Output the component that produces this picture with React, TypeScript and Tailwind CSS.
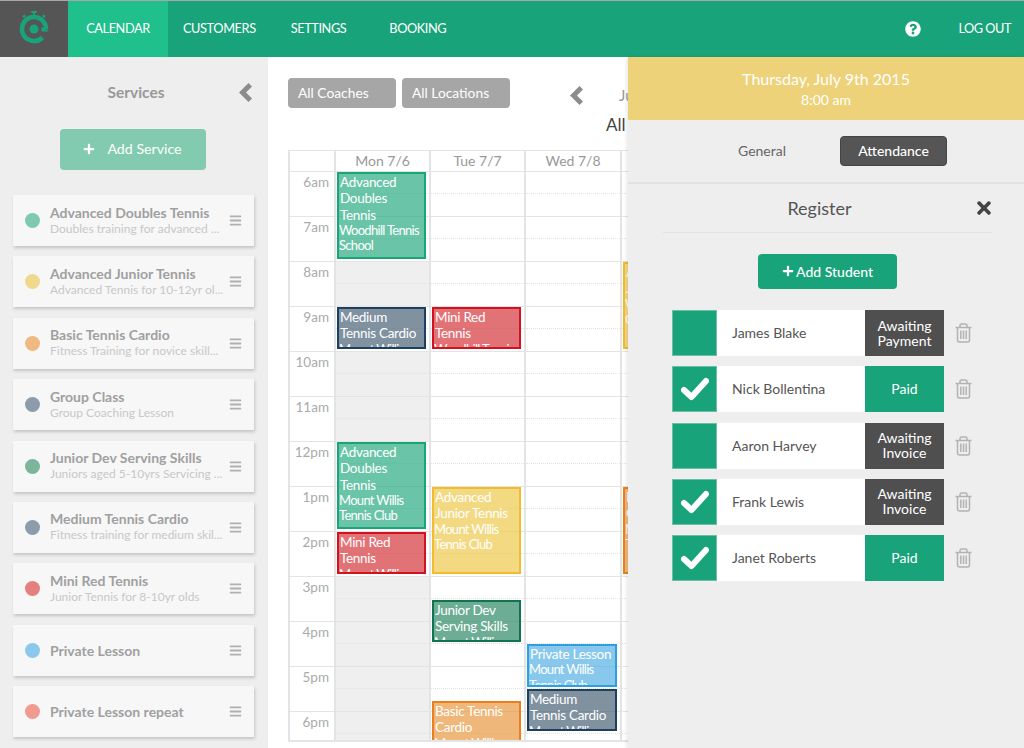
import React from "react";
import { FaBars, FaPlus, FaQuestionCircle, FaTimes } from "react-icons/fa";

const services = [
  { name: "Advanced Doubles Tennis", note: "Doubles training for advanced ...", dot: "bg-[#7fcaaf]" },
  { name: "Advanced Junior Tennis", note: "Advanced Tennis for 10-12yr ol...", dot: "bg-[#f0d98c]" },
  { name: "Basic Tennis Cardio", note: "Fitness Training for novice skill...", dot: "bg-[#efb981]" },
  { name: "Group Class", note: "Group Coaching Lesson", dot: "bg-[#8d9cab]" },
  { name: "Junior Dev Serving Skills", note: "Juniors aged 5-10yrs Servicing ...", dot: "bg-[#7db49c]" },
  { name: "Medium Tennis Cardio", note: "Fitness training for medium skil...", dot: "bg-[#8d9cab]" },
  { name: "Mini Red Tennis", note: "Junior Tennis for 8-10yr olds", dot: "bg-[#e58080]" },
  { name: "Private Lesson", note: "", dot: "bg-[#8cc8ec]" },
  { name: "Private Lesson repeat", note: "", dot: "bg-[#f09a90]" },
];

const hours = ["6am", "7am", "8am", "9am", "10am", "11am", "12pm", "1pm", "2pm", "3pm", "4pm", "5pm", "6pm"];
const days = ["Mon 7/6", "Tue 7/7", "Wed 7/8", "Thu 7/9"];

const green = "border-[#1aa579] bg-[#1aa579]/65";
const navy = "border-[#1f3f5f] bg-[#4a6378]/70";
const red = "border-[#d2121f] bg-[#d4383c]/70";
const yellow = "border-[#f2bd2c] bg-[#efc94f]/70";
const teal = "border-[#11734f] bg-[#2f8a68]/70";
const orange = "border-[#ea7f1c] bg-[#e89a42]/70";
const blue = "border-[#2f9fe0] bg-[#55b0e6]/70";

type Cal = { top: number; h: number; title: string; place: string; color: string };

const events: Cal[][] = [
  [
    { top: 0, h: 87, title: "Advanced Doubles Tennis", place: "Woodhill Tennis School", color: green },
    { top: 135, h: 42, title: "Medium Tennis Cardio", place: "Mount Willis Tennis Club", color: navy },
    { top: 270, h: 87, title: "Advanced Doubles Tennis", place: "Mount Willis Tennis Club", color: green },
    { top: 360, h: 42, title: "Mini Red Tennis", place: "Mount Willis Tennis Club", color: red },
  ],
  [
    { top: 135, h: 42, title: "Mini Red Tennis", place: "Woodhill Tennis Club", color: red },
    { top: 315, h: 87, title: "Advanced Junior Tennis", place: "Mount Willis Tennis Club", color: yellow },
    { top: 428, h: 42, title: "Junior Dev Serving Skills", place: "Mount Willis Tennis Club", color: teal },
    { top: 529, h: 60, title: "Basic Tennis Cardio", place: "Mount Willis Tennis Club", color: orange },
  ],
  [
    { top: 472, h: 43, title: "Private Lesson", place: "Mount Willis Tennis Club", color: blue },
    { top: 517, h: 42, title: "Medium Tennis Cardio", place: "Mount Willis Tennis Club", color: navy },
  ],
  [
    { top: 90, h: 87, title: "Advanced Junior Tennis", place: "Woodhill Tennis Club", color: yellow },
    { top: 315, h: 87, title: "Basic Tennis Cardio", place: "Mount Willis Tennis Club", color: orange },
  ],
];

const students = [
  { name: "James Blake", checked: false, status: "Awaiting Payment", paid: false },
  { name: "Nick Bollentina", checked: true, status: "Paid", paid: true },
  { name: "Aaron Harvey", checked: false, status: "Awaiting Invoice", paid: false },
  { name: "Frank Lewis", checked: true, status: "Awaiting Invoice", paid: false },
  { name: "Janet Roberts", checked: true, status: "Paid", paid: true },
];

const grayMonday = [2, 4, 5, 9, 10, 11, 12];

const Logo = () => (
  <svg width="36" height="36" viewBox="0 0 36 36" fill="none">
    <rect x="15" y="0" width="6" height="2" rx="1" fill="#19a37a" />
    <rect x="17" y="1" width="2" height="4" fill="#19a37a" />
    <rect x="6.5" y="4" width="3" height="2.5" rx="1" fill="#19a37a" transform="rotate(-40 8 5)" />
    <rect x="26.5" y="4" width="3" height="2.5" rx="1" fill="#19a37a" transform="rotate(40 28 5)" />
    <path d="M30 18.5 A12 12 0 1 0 26.5 26.5" stroke="#19a37a" strokeWidth="4.6" />
    <path d="M25.5 15.5 L33 20.5 L25.5 20.5 Z" fill="#19a37a" />
    <circle cx="18" cy="18" r="4.5" fill="#19a37a" />
  </svg>
);

const Chevron = ({ className }: { className: string }) => (
  <svg width="13" height="19" viewBox="0 0 13 19" className={className}>
    <polygon points="9.5,0 13,3.5 7,9.5 13,15.5 9.5,19 0,9.5" fill="#8c8c8c" />
  </svg>
);

const Check = () => (
  <svg width="28" height="24" viewBox="0 0 28 24" fill="none">
    <path d="M3 13 L10.5 20 L25 4" stroke="#ffffff" strokeWidth="6" strokeLinejoin="round" strokeLinecap="round" />
  </svg>
);

const Trash = () => (
  <svg width="17" height="20" viewBox="0 0 17 20" fill="none" stroke="#b3b3b3" strokeWidth="1.5">
    <path d="M0.5 4.5 H16.5" />
    <path d="M5 4.5 V2.5 C5 1.5 5.7 1 6.5 1 H10.5 C11.3 1 12 1.5 12 2.5 V4.5" />
    <path d="M2.5 4.5 V17 C2.5 18.2 3.3 19 4.5 19 H12.5 C13.7 19 14.5 18.2 14.5 17 V4.5" />
    <path d="M5.8 7.5 V16 M8.5 7.5 V16 M11.2 7.5 V16" />
  </svg>
);

const NavLink = ({ label, className }: { label: string; className: string }) => (
  <a className={`flex h-full items-center text-[12.75px] tracking-[-0.4px] text-white ${className}`}>{label}</a>
);

const App = () => {
  return (
    <div className="relative flex h-[748px] w-[1024px] flex-col overflow-hidden bg-white font-['Lato',sans-serif]">
      {/* top nav */}
      <header className="flex h-[57px] shrink-0 items-stretch border-t border-[#a8a8a8] bg-[#19a37a]">
        <div className="flex w-[68px] items-center justify-center bg-[#555555]">
          <Logo />
        </div>
        <NavLink label="CALENDAR" className="w-[100px] justify-center bg-[#1fc08c]" />
        <NavLink label="CUSTOMERS" className="ml-[15px]" />
        <NavLink label="SETTINGS" className="ml-[35px]" />
        <NavLink label="BOOKING" className="ml-[43px]" />
        <div className="ml-auto flex items-center">
          <FaQuestionCircle className="mr-[37px] text-white" size={16} />
          <span className="mr-[13px] text-[12.75px] tracking-[-0.5px] text-white">LOG OUT</span>
        </div>
      </header>

      <div className="flex min-h-0 flex-1">
        {/* services sidebar */}
        <aside className="flex w-[268px] shrink-0 flex-col overflow-hidden bg-[#eeeeee] pl-[13px] pr-[14px]">
          <div className="relative mt-[26px] flex h-[20px] items-center justify-center pl-[5px]">
            <h2 className="text-[15.5px] font-bold text-[#999999]">Services</h2>
            <Chevron className="absolute right-[2px] top-0" />
          </div>
          <button className="mx-auto mt-[26px] flex h-[41px] w-[146px] -translate-x-[1px] items-center justify-center rounded bg-[#83cbb0] pb-[1px] text-[14.2px] text-white">
            <FaPlus size={12} className="mr-[12px]" />
            Add Service
          </button>
          <ul className="mt-[25px] flex flex-col gap-[10.4px]">
            {services.map((s) => (
              <li
                key={s.name}
                className="flex h-[51px] shrink-0 items-center bg-[#f7f7f7] pl-[12px] pr-[12px] shadow-[1px_2px_3px_rgba(0,0,0,0.18)]"
              >
                <span className={`h-[15px] w-[15px] shrink-0 rounded-full ${s.dot}`} />
                <div className={`ml-[10px] min-w-0 flex-1 ${s.note ? "pb-[2px]" : ""}`}>
                  <p className="whitespace-nowrap text-[14px] font-bold leading-[17px] text-[#a0a0a0]">{s.name}</p>
                  {s.note && <p className="whitespace-nowrap text-[12px] leading-[15px] text-[#c8c8c8]">{s.note}</p>}
                </div>
                <FaBars size={13} className="shrink-0 text-[#b0b0b0]" />
              </li>
            ))}
          </ul>
        </aside>

        {/* calendar */}
        <main className="min-w-0 flex-1 overflow-hidden pl-[20px]">
          <div className="mt-[21px] flex gap-[6px]">
            <button className="flex h-[30px] w-[108px] items-center rounded bg-[#a6a6a6] pl-[10px] text-[13.8px] text-white">
              All Coaches
            </button>
            <button className="flex h-[30px] w-[108px] items-center rounded bg-[#a6a6a6] pl-[10px] text-[13.8px] text-white">
              All Locations
            </button>
            <Chevron className="ml-[54px] mt-[8px]" />
            <span className="ml-[30px] mt-[6px] text-[15px] text-[#999999]">July</span>
          </div>
          <p className="ml-[318px] mt-[6px] h-[22px] whitespace-nowrap text-[17px] leading-[22px] text-[#444444]">All</p>
          <div className="mt-[14px] grid w-[427px] grid-cols-[46px_95px_95px_96px_95px] border-b-2 border-t border-[#e4e4e4]">
            <div className="h-[21px] border-b border-l-2 border-[#e4e4e4]" />
            {days.map((d) => (
              <div key={d} className="flex h-[21px] items-center justify-center border-b border-l-2 border-[#e4e4e4] pb-[2px] text-[14px] text-[#999999]">
                {d}
              </div>
            ))}
            <div className="h-[568px] overflow-hidden border-l-2 border-[#e4e4e4]">
              {hours.map((h) => (
                <div key={h} className="h-[45px] border-b border-[#e4e4e4] pr-[5px] pt-[2px] text-right text-[13.5px] leading-[16px] text-[#aaaaaa]">
                  {h}
                </div>
              ))}
            </div>
            {days.map((d, col) => (
              <div key={d} className="relative h-[568px] overflow-hidden border-l-2 border-[#e4e4e4]">
                {hours.map((h, i) => (
                  <div
                    key={h}
                    className={`h-[45px] border-b border-[#e4e4e4] ${col === 0 && grayMonday.includes(i) ? "bg-[#efefef]" : ""}`}
                  >
                    <div className="h-[22px] border-b border-dotted border-[#e4e4e4]" />
                  </div>
                ))}
                {events[col].map((ev) => (
                  <div
                    key={ev.top}
                    className={`absolute left-[1px] right-[3px] overflow-hidden border-2 text-white ${ev.color}`}
                    style={{ top: ev.top, height: ev.h }}
                  >
                    <p className="pl-[1px] text-[13.5px] leading-[16.3px] tracking-[-0.3px]">{ev.title}</p>
                    <p className="text-[13px] leading-[15.5px] tracking-[-0.7px]">{ev.place}</p>
                  </div>
                ))}
              </div>
            ))}
          </div>
        </main>
      </div>

      {/* booking panel */}
      <section className="absolute bottom-0 right-0 top-[57px] flex w-[396px] flex-col bg-[#eeeeee] shadow-[-2px_0_3px_rgba(0,0,0,0.08)]">
        <div className="flex h-[63px] shrink-0 flex-col items-center bg-[#edd27a] pt-[11px] text-white">
          <p className="text-[16px] leading-[22px]">Thursday, July 9th 2015</p>
          <p className="text-[14px] leading-[20px]">8:00 am</p>
        </div>
        <div className="flex h-[64px] shrink-0 items-center border-b-2 border-[#e2e2e2] pb-[1px]">
          <span className="ml-[110px] text-[14px] text-[#666666]">General</span>
          <button className="ml-[54px] h-[30px] w-[107px] rounded border border-[#444444] bg-[#555555] text-[14px] font-medium text-white">
            Attendance
          </button>
        </div>
        <div className="relative ml-[35px] mr-[32px] flex h-[49px] shrink-0 items-center justify-center border-b border-[#e2e2e2] pr-[16px]">
          <h3 className="text-[18px] text-[#555555]">Register</h3>
          <FaTimes size={20} className="absolute right-[-2px] top-[14px] text-[#444444]" />
        </div>
        <button className="ml-[130px] mt-[21px] flex h-[35px] w-[139px] shrink-0 items-center justify-center rounded bg-[#19a37a] pb-[1px] text-[14px] font-medium text-white">
          <FaPlus size={12} className="mr-[2px]" />
          Add Student
        </button>
        <ul className="ml-[44px] mt-[21px] flex w-[300px] flex-col gap-[10.3px]">
          {students.map((s) => (
            <li key={s.name} className="flex h-[46px] items-stretch">
              <div className="flex w-[45px] shrink-0 items-center justify-center border border-[#6cbfa4] bg-[#19a37a]">
                {s.checked && <Check />}
              </div>
              <div className="flex w-[148px] items-center bg-white pb-[1px] pl-[15px] text-[14px] text-[#555555]">{s.name}</div>
              <div
                className={`flex w-[79px] items-center justify-center px-[8px] pb-[1px] text-center text-[14px] leading-[15px] text-white ${
                  s.paid ? "bg-[#19a37a]" : "bg-[#4f4f4f]"
                }`}
              >
                {s.status}
              </div>
              <div className="flex flex-1 items-center justify-end">
                <Trash />
              </div>
            </li>
          ))}
        </ul>
      </section>
    </div>
  );
};

export default App;
